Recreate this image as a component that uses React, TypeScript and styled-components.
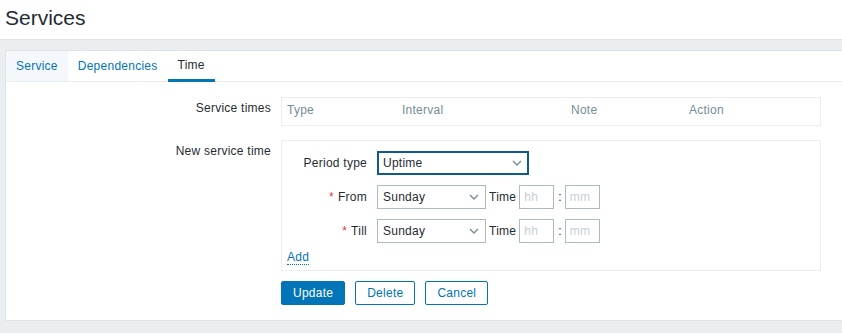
import React from "react";
import styled, { createGlobalStyle } from "styled-components";

//-----------Styled Components------------------

const GlobalStyle = createGlobalStyle`
  body {
    margin: 0;
    background: #ebeef0;
    font-family: "Liberation Sans", Arial, sans-serif;
    font-size: 12px;
    letter-spacing: 0.25px;
    color: #1f2c33;
  }
`;

const Page = styled.div`
  width: 842px;
  height: 333px;
  overflow: hidden;
  background: #ebeef0;
`;

const Header = styled.header`
  height: 39px;
  background: #ffffff;
  border-bottom: 1px solid #dfe4e7;
  padding-left: 5px;
`;

const Title = styled.h1`
  margin: 0;
  font-size: 21px;
  font-weight: normal;
  letter-spacing: 0;
  line-height: 36px;
  color: #1f2c33;
`;

const Wrapper = styled.main`
  padding: 10px 0 0 5px;
`;

const Panel = styled.section`
  background: #ffffff;
  border: 1px solid #dfe4e7;
  border-right: none;
  width: 900px;
`;

const TabList = styled.ul`
  display: flex;
  margin: 0;
  padding: 0;
  list-style: none;
  height: 30px;
  border-bottom: 1px solid #ebeef0;
`;

const Tab = styled.li<{ $active?: boolean; $hover?: boolean }>`
  padding: 0 10px;
  box-sizing: border-box;
  color: ${(p) => (p.$active ? "#1f2c33" : "#0275b8")};
  background: ${(p) => (p.$hover ? "#f4f8fb" : "transparent")};
  border-bottom: ${(p) => (p.$active ? "3px solid #0275b8" : "none")};
  height: ${(p) => (p.$active ? "31px" : "30px")};
  line-height: ${(p) => (p.$active ? "29px" : "30px")};
  cursor: pointer;
`;

const Form = styled.div`
  padding: 15px 0;
`;

const FormRow = styled.div<{ $gap?: number }>`
  display: grid;
  grid-template-columns: 265px 540px;
  column-gap: 10px;
  margin-bottom: ${(p) => p.$gap ?? 0}px;
`;

const Label = styled.label`
  text-align: right;
  line-height: 14px;
  padding-top: 4px;
`;

const Box = styled.div`
  border: 1px solid #ebeef0;
  box-sizing: border-box;
`;

const TimesTable = styled.table`
  width: 100%;
  border-collapse: collapse;
  table-layout: fixed;
`;

const HeadCell = styled.th<{ $w?: number }>`
  text-align: left;
  font-weight: normal;
  color: #768d99;
  padding: 5px 5px 8px;
  line-height: 14px;
  width: ${(p) => (p.$w ? `${p.$w}px` : "auto")};
`;

const Inner = styled.div`
  padding: 10px 5px 5px;
`;

const InnerRow = styled.div`
  display: grid;
  grid-template-columns: 80px auto;
  column-gap: 10px;
  align-items: center;
  margin-bottom: 10px;
`;

const InnerLabel = styled.span`
  text-align: right;
`;

const Asterisk = styled.span`
  color: #e33734;
  margin-right: 4px;
`;

const Fields = styled.div`
  display: flex;
  align-items: center;
`;

const SelectBox = styled.div<{ $w: number; $focus?: boolean }>`
  position: relative;
  width: ${(p) => p.$w}px;
  height: 24px;
  box-sizing: border-box;
  border: 1px solid ${(p) => (p.$focus ? "#0f5a8c" : "#acbbc2")};
  ${(p) => (p.$focus ? "box-shadow: inset 0 0 0 1px #0f5a8c;" : "")}
  display: flex;
  align-items: center;
  padding-left: 5px;
  color: #1f2c33;
`;

const Chevron = styled.svg`
  position: absolute;
  right: 6px;
  top: 8px;
`;

const TimeText = styled.span`
  margin: 0 3px 0 3px;
`;

const TimeInput = styled.input`
  width: 35px;
  height: 24px;
  box-sizing: border-box;
  border: 1px solid #acbbc2;
  padding: 0 4px;
  font-family: inherit;
  font-size: 12px;
  letter-spacing: 0.25px;
  outline: none;
  &::placeholder {
    color: #c5d0d5;
  }
`;

const Colon = styled.span`
  margin: 0 3px 0 4px;
`;

const AddLink = styled.a`
  display: block;
  width: fit-content;
  margin-top: -3px;
  color: #0275b8;
  line-height: 14px;
  border-bottom: 1px dotted #0275b8;
  text-decoration: none;
`;

const Buttons = styled.div`
  display: flex;
  gap: 10px;
`;

const Button = styled.button<{ $primary?: boolean }>`
  height: 24px;
  padding: 0 11px;
  font-family: inherit;
  font-size: 12px;
  letter-spacing: 0.25px;
  border: 1px solid #0275b8;
  border-radius: 2px;
  background: ${(p) => (p.$primary ? "#0275b8" : "#ffffff")};
  color: ${(p) => (p.$primary ? "#ffffff" : "#0275b8")};
  cursor: pointer;
`;

//==============================================

function Select({ value, width, focus }: { value: string; width: number; focus?: boolean }) {
  return (
    <SelectBox $w={width} $focus={focus}>
      {value}
      <Chevron width="10" height="6" viewBox="0 0 10 6">
        <path d="M1 1l4 4 4-4" fill="none" stroke="#768d99" strokeWidth="1.4" />
      </Chevron>
    </SelectBox>
  );
}

function DayRow({ label }: { label: string }) {
  return (
    <InnerRow>
      <InnerLabel>
        <Asterisk>*</Asterisk>
        {label}
      </InnerLabel>
      <Fields>
        <Select value="Sunday" width={109} />
        <TimeText>Time</TimeText>
        <TimeInput placeholder="hh" />
        <Colon>:</Colon>
        <TimeInput placeholder="mm" />
      </Fields>
    </InnerRow>
  );
}

export default function App() {
  return (
    <Page>
      <GlobalStyle />
      <Header>
        <Title>Services</Title>
      </Header>
      <Wrapper>
        <Panel>
          <TabList>
            <Tab $hover>Service</Tab>
            <Tab>Dependencies</Tab>
            <Tab $active>Time</Tab>
          </TabList>
          <Form>
            <FormRow $gap={14}>
              <Label>Service times</Label>
              <Box>
                <TimesTable>
                  <thead>
                    <tr>
                      <HeadCell $w={105}>Type</HeadCell>
                      <HeadCell $w={159}>Interval</HeadCell>
                      <HeadCell $w={108}>Note</HeadCell>
                      <HeadCell>Action</HeadCell>
                    </tr>
                  </thead>
                </TimesTable>
              </Box>
            </FormRow>
            <FormRow $gap={10}>
              <Label>New service time</Label>
              <Box>
                <Inner>
                  <InnerRow>
                    <InnerLabel>Period type</InnerLabel>
                    <Fields>
                      <Select value="Uptime" width={152} focus />
                    </Fields>
                  </InnerRow>
                  <DayRow label="From" />
                  <DayRow label="Till" />
                  <AddLink href="#">Add</AddLink>
                </Inner>
              </Box>
            </FormRow>
            <FormRow>
              <span />
              <Buttons>
                <Button $primary>Update</Button>
                <Button>Delete</Button>
                <Button>Cancel</Button>
              </Buttons>
            </FormRow>
          </Form>
        </Panel>
      </Wrapper>
    </Page>
  );
}
